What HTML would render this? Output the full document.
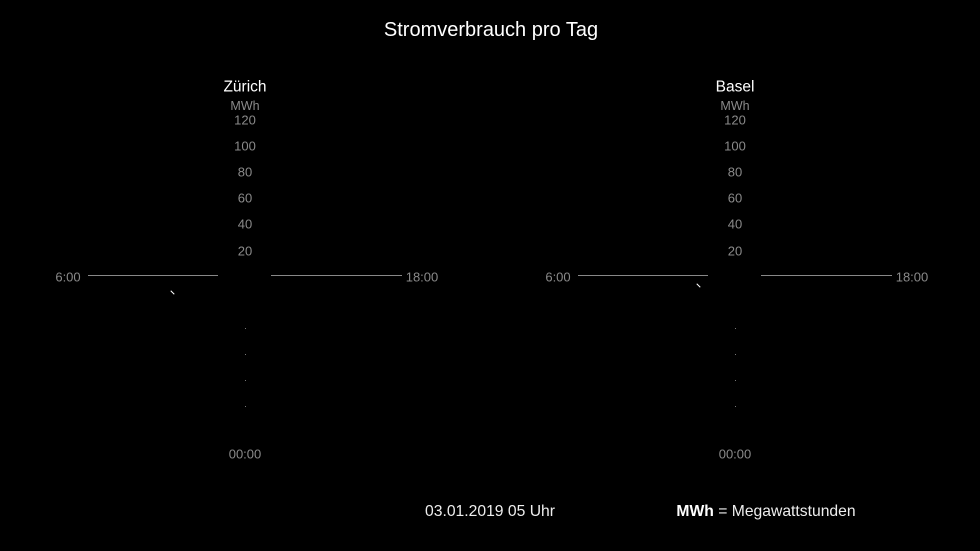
<!DOCTYPE html>
<html><head><meta charset="utf-8"><style>
body{margin:0;width:980px;height:551px;background:#000;overflow:hidden;position:relative;font-family:"Liberation Sans",sans-serif}
.t{position:absolute;transform:translate(-50%,-50%);white-space:nowrap;line-height:1}
.g{color:#8a8a8a;font-size:13px}
.w{color:#fff}
.l{position:absolute;height:1px;background:#888}
.d{position:absolute;width:1px;height:1px;background:#777}
.m{position:absolute;width:1px;height:5px;background:#fff;transform:rotate(-45deg)}
</style></head><body>
<div class="t w" style="left:491px;top:30px;font-size:20px">Stromverbrauch pro Tag</div>

<div class="t w" style="left:245px;top:87px;font-size:15.5px">Zürich</div>
<div class="t g" style="left:245px;top:106px;font-size:12.5px">MWh</div>
<div class="t g" style="left:245px;top:120px">120</div>
<div class="t g" style="left:245px;top:146px">100</div>
<div class="t g" style="left:245px;top:172px">80</div>
<div class="t g" style="left:245px;top:198px">60</div>
<div class="t g" style="left:245px;top:224px">40</div>
<div class="t g" style="left:245px;top:251px">20</div>
<div class="t g" style="left:68px;top:277px">6:00</div>
<div class="t g" style="left:422px;top:277px">18:00</div>
<div class="t g" style="left:245px;top:454px">00:00</div>
<div class="l" style="left:88px;top:275px;width:130px"></div>
<div class="l" style="left:271px;top:275px;width:131px"></div>
<div class="d" style="left:245px;top:328px"></div>
<div class="d" style="left:245px;top:354px"></div>
<div class="d" style="left:245px;top:380px"></div>
<div class="d" style="left:245px;top:406px"></div>
<div class="m" style="left:172px;top:290px"></div>

<div class="t w" style="left:735px;top:87px;font-size:15.5px">Basel</div>
<div class="t g" style="left:735px;top:106px;font-size:12.5px">MWh</div>
<div class="t g" style="left:735px;top:120px">120</div>
<div class="t g" style="left:735px;top:146px">100</div>
<div class="t g" style="left:735px;top:172px">80</div>
<div class="t g" style="left:735px;top:198px">60</div>
<div class="t g" style="left:735px;top:224px">40</div>
<div class="t g" style="left:735px;top:251px">20</div>
<div class="t g" style="left:558px;top:277px">6:00</div>
<div class="t g" style="left:912px;top:277px">18:00</div>
<div class="t g" style="left:735px;top:454px">00:00</div>
<div class="l" style="left:578px;top:275px;width:130px"></div>
<div class="l" style="left:761px;top:275px;width:131px"></div>
<div class="d" style="left:735px;top:328px"></div>
<div class="d" style="left:735px;top:354px"></div>
<div class="d" style="left:735px;top:380px"></div>
<div class="d" style="left:735px;top:406px"></div>
<div class="m" style="left:698px;top:283px"></div>

<div class="t w" style="left:490px;top:512px;font-size:15.7px;color:#eee">03.01.2019 05 Uhr</div>
<div class="t w" style="left:766px;top:512px;font-size:15.7px;color:#eee"><b style="color:#fff">MWh</b> = Megawattstunden</div>
</body></html>
